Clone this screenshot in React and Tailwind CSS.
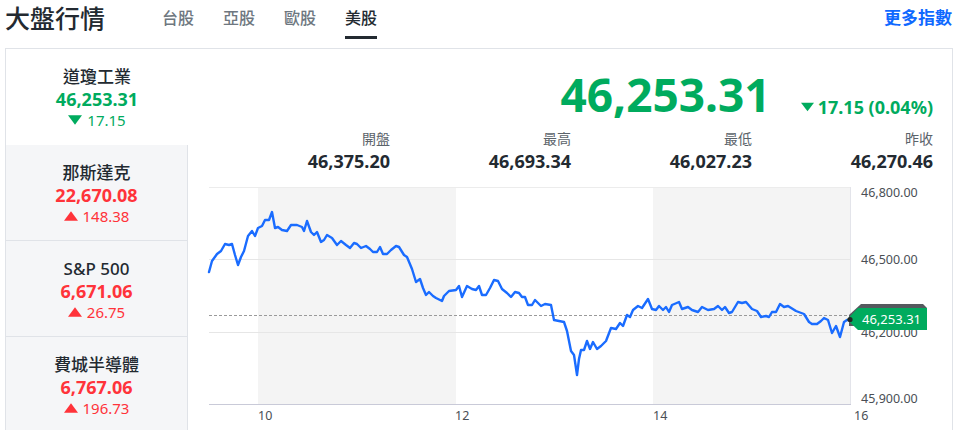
import React from "react";

const GREEN = "#00ab5e";
const RED = "#ff333a";

const pts = "210,273 213,262 218,255 222,252 226,245 230,246 233,245 236,256 239,266 242,258 245,252 249,237 253,232 256,237 259,229 263,227 266,221 270,221 273,213 276,229 279,228 283,231 288,232 292,226 298,226 303,228 305,232 308,222 312,233 315,236 318,233 322,243 325,241 328,236 333,239 338,246 342,242 347,246 351,249 355,244 358,245 362,249 367,247 371,250 374,253 378,253 381,248 384,255 388,255 392,251 397,247 400,248 405,256 408,258 413,270 417,283 421,280 424,289 427,296 430,293 434,297 437,299 443,302 445,297 450,292 457,291 460,287 463,298 468,287 473,290 477,291 480,287 483,296 487,296 491,289 495,281 499,282 503,290 508,294 512,298 516,293 520,294 523,298 526,298 529,306 533,306 536,301 542,307 546,305 552,306 555,321 560,322 565,323 568,332 572,352 575,356 578,376 580,360 582,351 585,351 588,342 591,350 594,343 598,350 602,347 607,342 612,329 617,330 621,324 624,327 628,316 631,318 634,311 639,307 643,309 649,300 653,310 657,311 660,307 664,311 667,308 670,313 673,306 680,303 683,310 689,308 693,311 699,313 703,308 709,311 715,310 719,307 723,311 726,308 730,314 733,313 739,303 743,304 747,303 753,310 758,312 762,318 767,317 770,318 773,313 777,313 781,305 785,308 789,307 797,312 805,315 810,323 813,325 818,325 822,322 825,319 829,321 833,334 837,327 841,338 845,323 848,321 851,321";

function Tri({ up, color, w = 13, h = 9 }) {
  return (
    <svg width={w} height={h} viewBox="0 0 12 8" className="inline-block">
      {up ? (
        <polygon points="0,8 12,8 6,0" fill={color} />
      ) : (
        <polygon points="0,0 12,0 6,8" fill={color} />
      )}
    </svg>
  );
}

const indices = [
  { name: "道瓊工業", value: "46,253.31", change: "17.15", up: false },
  { name: "那斯達克", value: "22,670.08", change: "148.38", up: true },
  { name: "S&P 500", value: "6,671.06", change: "26.75", up: true },
  { name: "費城半導體", value: "6,767.06", change: "196.73", up: true },
];

const stats = [
  { label: "開盤", value: "46,375.20" },
  { label: "最高", value: "46,693.34" },
  { label: "最低", value: "46,027.23" },
  { label: "昨收", value: "46,270.46" },
];

function Chart() {
  const axisY = [
    { t: "46,800.00", y: 198 },
    { t: "46,500.00", y: 265 },
    { t: "46,200.00", y: 338 },
    { t: "45,900.00", y: 404 },
  ];
  const xl = [
    { t: "10", x: 259 },
    { t: "12", x: 456 },
    { t: "14", x: 654 },
    { t: "16", x: 855 },
  ];
  return (
    <svg width="764" height="250" viewBox="188 180 764 250" className="block">
      <rect x="259" y="188" width="198" height="217" fill="#f4f4f4" />
      <rect x="654" y="188" width="197" height="217" fill="#f4f4f4" />
      <line x1="210" y1="188.5" x2="851" y2="188.5" stroke="#ececec" strokeWidth="1" />
      <line x1="210" y1="260.5" x2="851" y2="260.5" stroke="#e6e6e6" strokeWidth="1" />
      <line x1="210" y1="333.5" x2="851" y2="333.5" stroke="#e6e6e6" strokeWidth="1" />
      <line x1="851.5" y1="188" x2="851.5" y2="405" stroke="#e3e4ea" strokeWidth="1" />
      <line x1="210" y1="405.5" x2="852" y2="405.5" stroke="#c9cad8" strokeWidth="1" />
      <line x1="210" y1="316.5" x2="851" y2="316.5" stroke="#9a9a9a" strokeWidth="1" strokeDasharray="3 2" />
      <polyline points={pts} fill="none" stroke="#1a6cff" strokeWidth="2.4" strokeLinejoin="round" strokeLinecap="round" />
      {axisY.map((a) => (
        <text key={a.t} x="862" y={a.y} fontSize="12.5" fill="#4a4f55" fontFamily="'Noto Sans', sans-serif">
          {a.t}
        </text>
      ))}
      {xl.map((a) => (
        <text key={a.t} x={a.x} y="421" fontSize="12.5" fill="#4a4f55" fontFamily="'Noto Sans', sans-serif">
          {a.t}
        </text>
      ))}
      <polygon points="850,316 862,305 924,305 928,309 928,327 850,327" fill="#55595e" />
      <polygon points="848,320.5 859,309 928,309 928,331 859,331" fill={GREEN} />
      <text x="863" y="325" fontSize="13" fill="#ffffff" fontFamily="'Noto Sans', sans-serif">
        46,253.31
      </text>
      <circle cx="851" cy="320.5" r="2.6" fill="#222" />
    </svg>
  );
}

export default function App() {
  return (
    <div className="w-[959px] h-[430px] overflow-hidden bg-white font-['Noto_Sans','Noto_Sans_CJK_TC',sans-serif] text-[#232a31]">
      <div className="flex items-start h-[48px] pl-[5px] pr-[7px]">
        <div className="text-[25px] leading-[36px] font-medium mt-0">大盤行情</div>
        <div className="flex ml-[57px] gap-[29px] mt-[6px]">
          {["台股", "亞股", "歐股", "美股"].map((t, i) => (
            <div key={t} className="flex flex-col items-stretch">
              <span
                className={
                  "text-[16px] leading-[24px] font-medium " +
                  (i === 3 ? "text-[#232a31]" : "text-[#6e7780]")
                }
              >
                {t}
              </span>
              <div className={"h-[3px] mt-[6px] " + (i === 3 ? "bg-[#232a31]" : "bg-transparent")} />
            </div>
          ))}
        </div>
        <div className="ml-auto mt-[6px] text-[17px] leading-[24px] font-bold text-[#0f69ff]">更多指數</div>
      </div>

      <div className="ml-[5px] w-[948px] border border-[#e0e3e8] flex">
        <div className="w-[182px] flex flex-col">
          {indices.map((it, i) => {
            const color = it.up ? RED : GREEN;
            return (
              <div
                key={it.name}
                className={
                  "h-[96px] pt-[16px] flex flex-col items-center " +
                  (i === 0
                    ? "bg-white"
                    : "bg-[#f5f6f8] border-r border-[#e0e3e8] " + (i < 3 ? "border-b" : ""))
                }
              >
                <div className="text-[17px] leading-[23px] font-medium text-[#232a31]">{it.name}</div>
                <div className="text-[18px] leading-[22px] font-bold" style={{ color }}>
                  {it.value}
                </div>
                <div className="flex items-center gap-[5px] text-[15px] leading-[20px]" style={{ color }}>
                  <Tri up={it.up} color={color} w={14} h={10} />
                  <span>{it.change}</span>
                </div>
              </div>
            );
          })}
        </div>

        <div className="flex-1 flex flex-col">
          <div className="flex justify-end items-baseline pr-[19px] pt-[20px] gap-[30px]">
            <div className="text-[46px] leading-[51px] font-bold" style={{ color: GREEN }}>
              46,253.31
            </div>
            <div className="flex items-center gap-[4px] text-[18px] leading-[20px] font-bold" style={{ color: GREEN }}>
              <Tri up={false} color={GREEN} w={13} h={10} />
              <span>17.15 (0.04%)</span>
            </div>
          </div>
          <div className="grid grid-cols-4 w-[724px] ml-[21px] mt-[9px]">
            {stats.map((s) => (
              <div key={s.label} className="flex flex-col items-end">
                <div className="text-[14px] leading-[20px] text-[#5b636a]">{s.label}</div>
                <div className="text-[18px] leading-[24px] font-bold text-[#232a31]">{s.value}</div>
              </div>
            ))}
          </div>
          <div className="mt-[6px] -ml-px">
            <Chart />
          </div>
        </div>
      </div>
    </div>
  );
}
